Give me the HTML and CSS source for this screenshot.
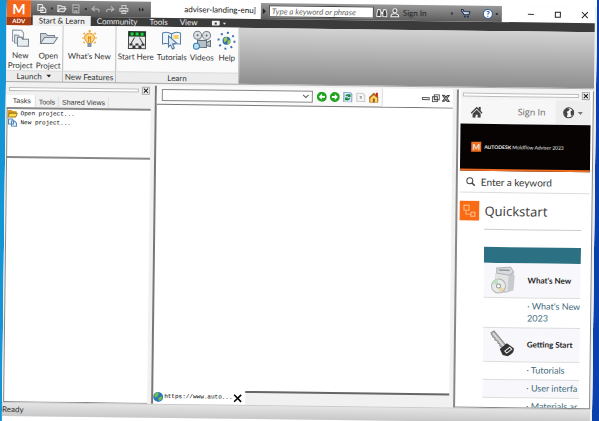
FILE: index.html
```html
<!DOCTYPE html>
<html lang="en">
<head>
    <meta charset="UTF-8">
    <meta name="viewport" content="width=device-width, initial-scale=1.0">
    <link rel="stylesheet" href="styles.css">
    <title>Moldflow Adviser</title>
</head>
<body>
    <div class="window">
        <header class="titlebar">
            <button class="app-btn"><b>M</b><span>ADV</span></button>
            <div class="quick">
                <button aria-label="New"><svg width="10" height="10" viewBox="0 0 10 10"><path d="M1 1h4l1 2v4H1z M4 4h3l2 2v3H4z" fill="#777" stroke="#eee"/></svg></button>
                <i class="dot"></i>
                <button aria-label="Open"><svg width="10" height="10" viewBox="0 0 10 10"><path d="M1 8V2h3l1 1h3v2M1 8l2-3h6L7 8z" fill="#777" stroke="#eee"/></svg></button>
                <button aria-label="Save"><svg width="10" height="10" viewBox="0 0 10 10"><path d="M2 1h6v8H2zM3 4h4M4 9V7h2v2" fill="#666" stroke="#bbb"/></svg></button>
                <i class="dot"></i>
                <button aria-label="Undo"><svg width="10" height="10" viewBox="0 0 10 10"><path d="M4 2L1 5l3 2M1 5h5q3 0 2 3" fill="none" stroke="#bbb"/></svg></button>
                <button aria-label="Redo"><svg width="10" height="10" viewBox="0 0 10 10"><path d="M6 2l3 3-3 2M9 5H4Q1 5 2 8" fill="none" stroke="#bbb"/></svg></button>
                <button aria-label="Print"><svg width="10" height="10" viewBox="0 0 10 10"><path d="M3 4V1h4v3M1 4h8v3H1zM3 6h4v3H3z" fill="#777" stroke="#ccc"/></svg></button>
                <button class="more" aria-label="More"><svg width="6" height="6" viewBox="0 0 6 6"><path d="M0 1l2 2-2 2zM3 1l2 2-2 2z" fill="#222"/></svg></button>
            </div>
            <div class="doc-title">adviser-landing-enu]</div>
            <div class="info">
                <svg width="8" height="8" viewBox="0 0 8 8"><path d="M2 1l3 3-3 3z" fill="#222"/></svg>
                <input type="text" aria-label="Search help" placeholder="Type a keyword or phrase">
                <button aria-label="Find"><svg width="12" height="11" viewBox="0 0 12 11"><path d="M1 9V6l1-4h2l1 3h2l1-3h2l1 4v3H7V6H5v3z" fill="#444" stroke="#eee"/></svg></button>
                <button class="signin"><svg width="10" height="11" viewBox="0 0 10 11"><circle cx="5" cy="3" r="2" fill="#555" stroke="#eee"/><path d="M1 9q0-3 4-3t4 3z" fill="#555" stroke="#eee"/></svg>Sign In</button>
                <i class="dot"></i>
                <button class="cart" aria-label="Cart"><svg width="10" height="10" viewBox="0 0 10 10"><path d="M0 1h2l1 2h6L8 6H3z" fill="#ccd4e4" stroke="#203050"/><circle cx="4" cy="8" r="1" fill="#203050"/><circle cx="7" cy="8" r="1" fill="#203050"/></svg></button>
                <button class="qmark" aria-label="Help">?</button>
                <i class="dot"></i>
            </div>
            <div class="sysbtns">
                <button aria-label="Minimize"><svg width="8" height="8" viewBox="0 0 8 8"><path d="M1 4h6" stroke="#333"/></svg></button>
                <button aria-label="Maximize"><svg width="8" height="8" viewBox="0 0 8 8"><path d="M1.500 1.500h5v5h-5z" fill="none" stroke="#222"/></svg></button>
                <button aria-label="Close"><svg width="8" height="8" viewBox="0 0 8 8"><path d="M1 1l6 6M7 1L1 7" stroke="#222"/></svg></button>
            </div>
        </header>

        <nav class="menu">
            <button class="active">Start &amp; Learn</button>
            <button>Community</button>
            <button>Tools</button>
            <button>View</button>
            <button class="rec" aria-label="Ribbon display"><svg width="16" height="6" viewBox="0 0 16 6"><rect width="8" height="5" rx="1" fill="#eee"/><path d="M3 2h2v2H3z" fill="#333"/><path d="M11 2h3l-1 2z" fill="#eee"/></svg></button>
        </nav>

        <section class="ribbon">
            <div class="group launch">
                <div class="tools">
                    <button><svg width="20" height="20" viewBox="0 0 20 20"><path d="M2 2h9l2 3v8H2z" fill="#f6f8fa" stroke="#8b959f"/><path d="M4 7h4l1 2h3v6H4z" fill="#d5dde4" stroke="#8b959f"/><path d="M7 9h4l1 2h6v7H7z" fill="#e8edf1" stroke="#75818d"/></svg>New<br>Project</button>
                    <button><svg width="20" height="20" viewBox="0 0 20 20"><path d="M2 15V5h5l2 2h7v3" fill="#cbd3da" stroke="#75818d"/><path d="M2 15l4-6h13l-4 6z" fill="#e5eaee" stroke="#75818d"/></svg>Open<br>Project</button>
                </div>
                <div class="label">Launch <svg width="6" height="4" viewBox="0 0 6 4"><path d="M0 0h5L3 3z" fill="#222"/></svg></div>
            </div>
            <div class="group news">
                <div class="tools">
                    <button><svg width="20" height="20" viewBox="0 0 20 20"><path d="M10 1v2M4 4l1 1M16 4l-1 1M3 9h1M16 9h1M4 14l1-1M16 14l-1-1" stroke="#e9a83a" stroke-width="2"/><path d="M5 9a5 5 0 1 1 10 0q0 2-3 5H8Q5 11 5 9z" fill="#ffd67d" stroke="#dd9a3a"/><path d="M9 13V8l1 1 1-1v5" fill="none" stroke="#d98f31"/><path d="M8 14h4v4H8z" fill="#8395a5"/></svg>What's New</button>
                </div>
                <div class="label">New Features</div>
            </div>
            <div class="group learn">
                <div class="tools">
                    <button><svg width="20" height="20" viewBox="0 0 20 20"><path d="M2 2h17v17H2z" fill="#e6e8e9" stroke="#444"/><path d="M2 2h17v5H2z" fill="#1b3a22"/><path d="M4 3h3v3H4zM9 3h3v3H9zM14 3h3v3h-3z" fill="#24cf41"/><path d="M8 8L4 15M13 8l4 7" stroke="#444"/><path d="M3 14h3v2H3zM9 14h3v2H9zM15 14h3v2h-3zM6 16h3v3H6zM12 16h3v3h-3z" fill="#333"/></svg>Start Here</button>
                    <button><svg width="20" height="20" viewBox="0 0 20 20"><path d="M1 3q5-2 9 1 4-3 9-1v11q-5-1-9 1-4-2-9-1z" fill="#eef5fb" stroke="#517ca8"/><path d="M10 4v10" stroke="#517ca8"/><path d="M12 5h5v4h-5z" fill="#f3ce69"/><path d="M7 6l8 7-4 1 2 4-2 1-2-4-2 2z" fill="#dce9f5" stroke="#507599"/></svg>Tutorials</button>
                    <button><svg width="20" height="20" viewBox="0 0 20 20"><circle cx="6" cy="5" r="4" fill="#dce0e3" stroke="#77828b"/><circle cx="15" cy="5" r="4" fill="#dce0e3" stroke="#77828b"/><circle cx="6" cy="5" r="1" fill="#596773"/><circle cx="15" cy="5" r="1" fill="#596773"/><path d="M6 10h9v7H6zM15 12l4-2v6l-4-1" fill="#b7c0c7" stroke="#606f7a"/><circle cx="5" cy="16" r="3" fill="#b9dff2" stroke="#337eaf"/></svg>Videos</button>
                    <button><svg width="20" height="20" viewBox="0 0 20 20"><circle cx="10" cy="10" r="8" fill="none" stroke="#3f6cb4" stroke-width="2" stroke-dasharray="2 4.283"/><circle cx="10" cy="10" r="4" fill="#2c72b7"/><path d="M7 8l3-2 1 3-3 3zM11 10l3-1v3l-3 2z" fill="#a1c94d"/></svg>Help</button>
                </div>
                <div class="label">Learn</div>
            </div>
        </section>

        <main class="work">
            <aside class="dock">
                <div class="grip"><i></i><button aria-label="Close tasks"><svg width="6" height="6" viewBox="0 0 6 6"><path d="M1 1l4 4M5 1L1 5" stroke="#111"/></svg></button></div>
                <div class="tabs">
                    <button class="active">Tasks</button>
                    <button>Tools</button>
                    <button>Shared Views</button>
                </div>
                <div class="tasks">
                    <a href="#"><svg width="10" height="9" viewBox="0 0 10 9"><path d="M0 8V1h4l1 1h4v2" fill="#d89a20"/><path d="M0 8l2-4h8L8 8z" fill="#ffdc52" stroke="#9b7515"/></svg>Open project...</a>
                    <a href="#"><svg width="10" height="9" viewBox="0 0 10 9"><path d="M1 1h4l1 2v3H1z M4 3h3l2 2v3H4z" fill="#e4f2ff" stroke="#5185b4"/></svg>New project...</a>
                </div>
                <div class="notes"></div>
            </aside>

            <section class="browser">
                <div class="bar">
                    <div class="combo">
                        <select aria-label="Address"><option></option></select>
                        <svg width="6" height="4" viewBox="0 0 6 4"><path d="M0 0l3 3 3-3" fill="none" stroke="#555"/></svg>
                    </div>
                    <button aria-label="Back"><svg width="10" height="10" viewBox="0 0 10 10"><circle cx="5" cy="5" r="5" fill="#23a421"/><path d="M2 5l3-3v2h3v2H5v2z" fill="#fff"/></svg></button>
                    <button aria-label="Forward"><svg width="10" height="10" viewBox="0 0 10 10"><circle cx="5" cy="5" r="5" fill="#23a421"/><path d="M8 5L5 2v2H2v2h3v2z" fill="#fff"/></svg></button>
                    <button aria-label="Refresh"><svg width="10" height="10" viewBox="0 0 10 10"><path d="M1 0h6l2 2v8H1z" fill="#dceafb" stroke="#779bc4"/><path d="M3 4q2-3 4 0M7 2v2H5M7 6q-2 3-4 0M3 8V6h2" fill="none" stroke="#16863f" stroke-width="1.500"/></svg></button>
                    <button aria-label="Stop"><svg width="10" height="10" viewBox="0 0 10 10"><path d="M1 1h6l2 2v6H1z" fill="#f5f5f5" stroke="#c6c6c6"/><path d="M4 4l2 2M6 4L4 6" stroke="#888"/></svg></button>
                    <button aria-label="Home"><svg width="10" height="10" viewBox="0 0 10 10"><path d="M1 5v5h8V5L5 2z" fill="#ffd46b" stroke="#a36a1b"/><path d="M0 6l5-5 4 4" fill="none" stroke="#b4661a" stroke-width="1.500"/><path d="M7 0h2v4H7z" fill="#c02d20"/><path d="M4 6h2v4H4z" fill="#9a5a17"/></svg></button>
                    <div class="mdi">
                        <button aria-label="Minimize page"><svg width="8" height="8" viewBox="0 0 8 8"><path d="M.5 3.500h7v2h-7z" fill="#fff" stroke="#555"/></svg></button>
                        <button aria-label="Restore page"><svg width="8" height="8" viewBox="0 0 8 8"><path d="M2.500.5h5v5h-5zM.5 2.500h5v5h-5zM2 5h2" fill="#fff" stroke="#444"/></svg></button>
                        <button aria-label="Close page"><svg width="8" height="8" viewBox="0 0 8 8"><path d="M.5 1h2L4 3l1.500-2h2L5 4l2.500 3h-2L4 5 2.500 7h-2L3 4z" fill="#fff" stroke="#444"/></svg></button>
                    </div>
                </div>
                <div class="page"></div>
                <div class="pagetabs">
                    <button><svg width="10" height="10" viewBox="0 0 10 10"><circle cx="5" cy="5" r="5" fill="#2876b8"/><path d="M1 3l3-3 2 2-2 3-2 1zM5 6l4-2v3L6 9z" fill="#72bd4c"/></svg>https://www.auto...<svg width="9" height="9" viewBox="0 0 9 9"><path d="M1 1l7 7M8 1L1 8" stroke="#000" stroke-width="1.500"/></svg></button>
                    <i></i>
                </div>
            </section>

            <aside class="help">
                <div class="grip"><i></i><button aria-label="Close help"><svg width="6" height="6" viewBox="0 0 6 6"><path d="M1 1l4 4M5 1L1 5" stroke="#111"/></svg></button></div>
                <div class="help-head">
                    <a href="#" aria-label="Home"><svg width="12" height="11" viewBox="0 0 12 11"><path d="M6 0l6 6-1 1-5-5-5 5-1-1zM8 0h2v4L8 2zM6 3l4 4v4H7V8H5v3H2V7z" fill="#444"/></svg></a>
                    <a href="#" class="login">Sign In</a>
                    <button aria-label="Language"><svg width="21" height="12" viewBox="0 0 21 12"><circle cx="6" cy="6" r="5" fill="#f4f4f4" stroke="#444"/><path d="M1 5l3-4 3 1-1 2-2 1 1 2-1 4-2-2zM8 4l3-1v4L9 9 8 7z" fill="#444"/><path d="M15 5h5l-2 3z" fill="#777"/></svg></button>
                </div>
                <div class="banner"><b>M</b><span><strong>AUTODESK</strong> Moldflow Adviser 2023</span></div>
                <div class="search">
                    <svg width="10" height="10" viewBox="0 0 10 10"><circle cx="4" cy="4" r="3" fill="none" stroke="#444"/><path d="M6 6l3 3" stroke="#444" stroke-width="1.500"/></svg>
                    <input type="text" aria-label="Enter a keyword" placeholder="Enter a keyword">
                </div>
                <div class="quickstart">
                    <svg width="20" height="20" viewBox="0 0 20 20"><path d="M0 0h20v20H0z" fill="#f96b14"/><path d="M4.500 4.500h5v5h-5zM11.500 11.500h4v4h-4zM6.500 9.500v4h5" fill="none" stroke="#ffc08c"/></svg>
                    <h1>Quickstart</h1>
                </div>
                <div class="topics">
                    <table>
                        <colgroup><col class="pic"><col></colgroup>
                        <thead><tr><td colspan="2"></td></tr></thead>
                        <tbody>
                            <tr class="topic">
                                <td><svg width="32" height="30" viewBox="0 0 32 30"><path d="M8 8l5-3 12 1 2 5-1 14-8 3-12-2z" fill="#c8cace"/><path d="M8 8l13 1-1 17-13-1z" fill="#e2e3e5"/><path d="M9 3l14-1 3 5-4 3-13-2z" fill="#d8dadd" stroke="#b0b3b6"/><path d="M11 5h11" stroke="#77797c"/><circle cx="11" cy="21" r="7" fill="#e5ebe8" stroke="#aeb1b0"/><path d="M11 21l-6-3q2-4 5-4z" fill="#bfe1c1"/><path d="M11 21l6 3q-2 3-5 3z" fill="#e9d7a8"/><circle cx="11" cy="21" r="2" fill="#fff" stroke="#999"/></svg></td>
                                <th>What's New</th>
                            </tr>
                            <tr class="tall"><td></td><td><a href="#">· What's New<br>2023</a></td></tr>
                            <tr class="topic">
                                <td><svg width="30" height="28" viewBox="0 0 30 28"><path d="M4 3l3-2 12 14-3 3-3-2v-2l-2-1v-2l-3-1V8L6 7z" fill="#b9babb" stroke="#888"/><path d="M6 3l11 13" stroke="#e8e8e8"/><path d="M13 19l7-6 7 5q1 5-6 8l-5-1z" fill="#333"/><path d="M18 21l5-4 2 2-5 4z" fill="none" stroke="#eee"/></svg></td>
                                <th>Getting Start</th>
                            </tr>
                            <tr><td></td><td><a href="#">· Tutorials</a></td></tr>
                            <tr class="alt"><td></td><td><a href="#">· User interfa</a></td></tr>
                            <tr><td></td><td><a href="#">· Materials ar</a></td></tr>
                        </tbody>
                    </table>
                </div>
            </aside>
        </main>

        <footer class="status">Ready</footer>
    </div>
</body>
</html>
```
FILE: styles.css
```css
* {
    margin: 0;
    padding: 0;
    box-sizing: border-box;
}
html {
    background: linear-gradient(to right, #1496d6 50%, #0a3fae 50%);
}
body {
    height: 100vh;
    padding: 0 2px 5px 7px;
    overflow: hidden;
    font-family: Lato, "Open Sans", sans-serif;
    font-size: 8px;
    line-height: 10px;
    color: #333;
}
button {
    border: none;
    background: none;
    font: inherit;
    color: inherit;
    display: flex;
    align-items: center;
}
svg {display: block; flex: none;}
a {color: inherit; text-decoration: none;}

/* the whole window leans slightly to the right */
.window {
    height: 100%;
    display: flex;
    flex-direction: column;
    background-color: #f1f1f1;
    border-right: 2px solid #eee;
    box-shadow: 0 -16px #fff, 0 16px #fff;
    transform: rotate(0.7deg);
    transform-origin: top left;
}

/* title bar */
.titlebar {
    display: flex;
    height: 16px;
    flex: none;
    background-color: #fff;
}
.app-btn {
    position: relative;
    z-index: 2;
    width: 24px;
    height: 25px;
    flex: none;
    flex-direction: column;
    background-color: #f4661c;
    color: #fff;
}
.app-btn b {font-size: 14px; line-height: 17px;}
.app-btn span {
    width: 100%;
    background-color: #a93c12;
    font-size: 6px;
    font-weight: bold;
    line-height: 8px;
}
.quick {
    display: flex;
    align-items: center;
    gap: 4px;
    width: 120px;
    padding-left: 6px;
    background: linear-gradient(#888, #555);
}
.more {margin-left: 6px;}
.dot {
    width: 2px;
    height: 2px;
    background-color: #333;
}
.doc-title {
    width: 110px;
    padding-right: 5px;
    line-height: 14px;
    text-align: right;
    color: #111;
    white-space: nowrap;
}
.info {
    display: flex;
    align-items: center;
    width: 241px;
    padding-right: 4px;
    background: linear-gradient(#999, #5c5c5c);
}
.info input {
    width: 105px;
    height: 12px;
    padding: 0 2px;
    border: 1px solid #444;
    background-color: #fff;
    font: italic 8px/10px Lato, sans-serif;
}
.info input::placeholder {color: #666; opacity: 1;}
.info > button {margin-left: 2px;}
.signin {gap: 3px; color: #222;}
.signin + .dot {margin-left: auto;}
.info .cart {margin: 0 10px 0 8px;}
.info .qmark {
    width: 10px;
    height: 10px;
    margin-right: 3px;
    justify-content: center;
    border: 1px solid #2f5c9a;
    border-radius: 50%;
    background-color: #fff;
    font-weight: bold;
    line-height: 8px;
    color: #1c4fa0;
}
.sysbtns {
    flex: 1;
    display: flex;
    justify-content: flex-end;
    align-items: center;
    gap: 19px;
    padding-right: 6px;
}

/* ribbon */
.menu {
    display: flex;
    flex: none;
    height: 9px;
    padding-left: 26px;
    background-color: #3b3b3b;
    color: #eee;
}
.menu button {padding: 0 6px; line-height: 9px;}
.menu .active {
    height: 11px;
    margin-top: -1px;
    background-color: #f1f1f1;
    color: #222;
}
.menu .rec {padding-left: 8px;}
.ribbon {
    display: flex;
    flex: none;
    height: 56px;
    background: linear-gradient(#d2d2d2, #8e8e8e);
}
.group {
    display: flex;
    flex-direction: column;
    border-right: 1px solid #bbb;
    background-color: #fbfbfb;
}
.launch {width: 57px;}
.news {width: 53px;}
.learn {width: 123px;}
.tools {
    flex: 1;
    display: flex;
    justify-content: space-around;
    align-items: flex-start;
    padding-top: 3px;
}
.tools button {flex-direction: column; white-space: nowrap;}
.tools svg {margin-bottom: 2px;}
.group .label {
    display: flex;
    justify-content: center;
    align-items: center;
    gap: 4px;
    border-top: 1px solid #ddd;
    background-color: #ececec;
    white-space: nowrap;
}

/* work area */
.work {
    flex: 1;
    display: flex;
    min-height: 0;
    gap: 4px;
    padding: 2px 0 0 1px;
    border-top: 1px solid #aaa;
}
.grip {
    display: flex;
    align-items: center;
    gap: 3px;
    height: 10px;
    padding: 0 1px 0 2px;
    flex: none;
}
.grip i {
    flex: 1;
    height: 4px;
    border: 1px solid #bbb;
    background-color: #fff;
}
.grip button {border: 1px solid #aaa; background-color: #eee;}
.dock {
    display: flex;
    flex-direction: column;
    width: 144px;
    border-bottom: 1px solid #888;
}
.tabs {display: flex; align-items: flex-end; height: 13px;}
.tabs button {
    height: 11px;
    padding: 0 3px;
    border-right: 1px solid #ddd;
    font: 7px/10px "Liberation Sans", sans-serif;
}
.tabs .active {height: 12px; padding: 0 4px 0 6px; background-color: #fff;}
.tasks, .notes {
    border-top: 2px solid #888;
    border-left: 1px solid #888;
    background-color: #fff;
}
.tasks {height: 49px;}
.tasks a {
    display: flex;
    align-items: center;
    gap: 3px;
    font: 6px/9px "Liberation Mono", monospace;
    color: #000;
}
.notes {flex: 1;}
.browser {
    flex: 1;
    display: flex;
    flex-direction: column;
    min-width: 0;
    border-left: 2px solid #777;
    background-color: #fff;
}
.bar {
    display: flex;
    align-items: center;
    gap: 3px;
    height: 19px;
    padding-left: 5px;
    border-bottom: 1px solid #777;
    background-color: #fafafa;
}
.combo {
    display: flex;
    align-items: center;
    width: 151px;
    height: 12px;
    margin-right: 1px;
    padding-right: 3px;
    border: 1px solid #888;
    background-color: #fff;
}
.combo select {
    flex: 1;
    height: 10px;
    appearance: none;
    border: none;
    background: none;
}
.mdi {
    flex: 1;
    display: flex;
    justify-content: flex-end;
    align-items: center;
    gap: 2px;
    height: 100%;
    padding-right: 3px;
    border-left: 1px solid #ddd;
    background-color: #fff;
}
.page {flex: 1;}
.pagetabs {display: flex; height: 14px;}
.pagetabs button {
    gap: 1px;
    font: 6px/14px "Liberation Mono", monospace;
    color: #000;
}
.pagetabs i {
    flex: 1;
    margin-left: 3px;
    border-top: 2px solid #666;
    background-color: #f1f1f1;
}

/* help panel */
.help {
    display: flex;
    flex-direction: column;
    width: 137px;
    padding: 0 2px;
    border: solid #888;
    border-width: 0 1px 1px 2px;
    background-color: #fff;
}
.help .grip {background-color: #f4f4f4;}
.help-head {
    display: flex;
    align-items: center;
    height: 24px;
    flex: none;
    padding-left: 10px;
    background-color: #f7f7f7;
    font: 9px/12px "Open Sans", sans-serif;
    color: #666;
}
.login {margin: 0 10px 0 auto;}
.help-head button {
    height: 100%;
    padding: 0 7px;
    background-color: #eee;
}
.banner {
    display: flex;
    align-items: center;
    gap: 3px;
    height: 47px;
    flex: none;
    padding-left: 11px;
    border-bottom: 2px solid #ee6b20;
    background-color: #060302;
    font-size: 5px;
    color: #eee;
    white-space: nowrap;
}
.banner b {
    width: 10px;
    background-color: #f07022;
    font-size: 8px;
    text-align: center;
}
.search {
    display: flex;
    align-items: center;
    gap: 5px;
    height: 22px;
    flex: none;
    padding-left: 6px;
    border-bottom: 1px solid #ddd;
}
.search input {
    flex: 1;
    min-width: 0;
    border: none;
    font: 10px/14px Lato, sans-serif;
}
.search input::placeholder {color: #333; opacity: 1;}
.quickstart {
    display: flex;
    align-items: center;
    gap: 5px;
    padding: 8px 0;
    flex: none;
}
.quickstart h1 {
    font: 13px/20px "Noto Sans", sans-serif;
    color: #444;
}
.topics {
    flex: 1;
    min-height: 0;
    overflow: hidden;
    margin: 0 8px 0 25px;
    padding-top: 17px;
    border-top: 1px solid #ccc;
    font-size: 9px;
    line-height: 12px;
}
table {
    width: 100%;
    table-layout: fixed;
    border-collapse: collapse;
}
.pic {width: 44px;}
thead td {height: 16px; background-color: #2c7083;}
tr.topic, tr.alt {background-color: #f8f8fc;}
tbody td, tbody th {
    height: 18px;
    border-bottom: 1px solid #ddd;
    text-align: left;
    white-space: nowrap;
}
.topic td, .topic th {height: 34px; font-size: 8px; color: #222;}
.topic td {padding-left: 4px;}
.tall td {height: 30px;}
.topics a {color: #426b7a;}

.status {
    flex: none;
    height: 14px;
    border-top: 1px solid #ccc;
    background: linear-gradient(#e4e4e4, #c8c8c8);
    line-height: 12px;
}
```
